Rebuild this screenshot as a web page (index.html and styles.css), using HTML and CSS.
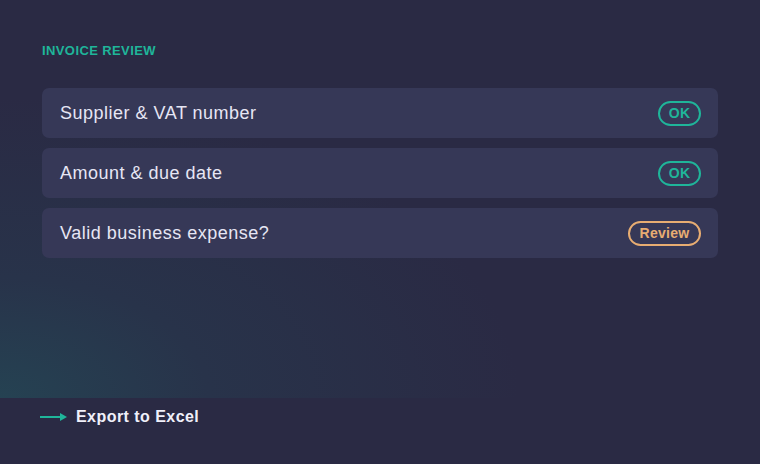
FILE: index.html
```html
<!DOCTYPE html>
<html>
<head>
<meta charset="utf-8">
<link rel="stylesheet" href="styles.css">
</head>
<body>
<div class="page">
  <section class="main">
    <div class="label">INVOICE REVIEW</div>
    <div class="list">
      <div class="row"><span class="row-text">Supplier &amp; VAT number</span><span class="badge ok">OK</span></div>
      <div class="row"><span class="row-text">Amount &amp; due date</span><span class="badge ok">OK</span></div>
      <div class="row"><span class="row-text">Valid business expense?</span><span class="badge review">Review</span></div>
    </div>
  </section>
  <footer class="footer">
    <svg class="arrow" width="28" height="10" viewBox="0 0 28 10"><line x1="0" y1="5" x2="22" y2="5" stroke="#1fb59a" stroke-width="2"/><path d="M20 1 L27 5 L20 9 Z" fill="#1fb59a"/></svg>
    <span class="export">Export to Excel</span>
  </footer>
</div>
</body>
</html>
```
FILE: styles.css
```css
html, body {
  margin: 0;
  padding: 0;
}
body {
  background: #2a2a44;
  font-family: "Liberation Sans", Arial, sans-serif;
  width: 760px;
  height: 464px;
  overflow: hidden;
}
.page {
  display: flex;
  flex-direction: column;
  height: 464px;
}
.main {
  height: 398px;
  box-sizing: border-box;
  padding: 43px 42px 0 42px;
  background: radial-gradient(ellipse 520px 300px at 0% 100%, rgba(36, 72, 86, 0.8) 0%, rgba(38, 60, 80, 0.5) 40%, rgba(42, 42, 68, 0) 100%);
}
.label {
  color: #1fb59a;
  font-size: 13px;
  font-weight: bold;
  letter-spacing: 0.4px;
  line-height: 16px;
}
.list {
  margin-top: 29px;
  display: flex;
  flex-direction: column;
  gap: 10px;
}
.row {
  height: 50px;
  background: #363857;
  border-radius: 7px;
  display: flex;
  align-items: center;
  justify-content: space-between;
  padding: 0 17px 0 18px;
}
.row-text {
  color: #e6e6f4;
  font-size: 18px;
  letter-spacing: 0.5px;
}
.badge {
  box-sizing: border-box;
  height: 25px;
  border: 2px solid;
  border-radius: 13px;
  font-size: 14px;
  font-weight: bold;
  letter-spacing: 0.3px;
  display: flex;
  align-items: center;
  justify-content: center;
  padding: 0 6px;
}
.badge.ok {
  color: #1fb59a;
  border-color: #1fb59a;
  width: 43px;
}
.badge.review {
  color: #e8ad72;
  border-color: #e8ad72;
  width: 73px;
}
.footer {
  display: flex;
  align-items: center;
  padding: 10px 0 0 40px;
  gap: 8px;
}
.arrow {
  display: block;
}
.export {
  color: #f0f0fa;
  font-size: 16px;
  font-weight: bold;
  letter-spacing: 0.45px;
}
```
